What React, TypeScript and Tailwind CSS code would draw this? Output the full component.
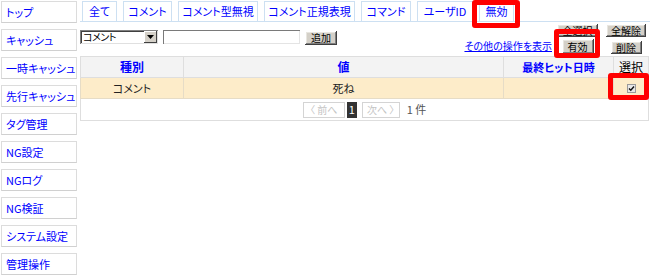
import React from "react";

const FONT = "[font-family:'Noto_Sans_CJK_JP','Noto_Sans',sans-serif] [font-feature-settings:'palt']";

const sideItems = [
  "トップ",
  "キャッシュ",
  "一時キャッシュ",
  "先行キャッシュ",
  "タグ管理",
  "NG設定",
  "NGログ",
  "NG検証",
  "システム設定",
  "管理操作",
];

const tabs: { label: string; w: string }[] = [
  { label: "全て", w: "w-[35px]" },
  { label: "コメント", w: "w-[49px]" },
  { label: "コメント型無視", w: "w-[80px]" },
  { label: "コメント正規表現", w: "w-[91px]" },
  { label: "コマンド", w: "w-[50px]" },
  { label: "ユーザID", w: "w-[56px]" },
  { label: "無効", w: "w-[35px]" },
];

function WinButton({ label, className = "" }: { label: string; className?: string }) {
  return (
    <div
      className={
        "flex items-center justify-center bg-[#d4d0c8] text-[10px] leading-none text-black whitespace-nowrap shadow-[inset_-1px_-1px_#404040,inset_1px_1px_#ffffff,inset_-2px_-2px_#808080,inset_2px_2px_#e8e6e0] " +
        className
      }
    >
      {label}
    </div>
  );
}

export default function App() {
  return (
    <div className={"relative w-[650px] h-[280px] bg-white overflow-hidden " + FONT}>
      <div className="flex pt-[1px] pl-[1px] gap-[3px]">
        {/* Sidebar */}
        <div className="flex flex-col gap-[6px] w-[76px] shrink-0">
          {sideItems.map((s) => (
            <div
              key={s}
              className="h-[22px] border border-[#dcdcdc] border-b-[#d0d0d0] pl-[4px] flex items-center text-[11px] leading-none text-[#0000ff] whitespace-nowrap"
            >
              {s}
            </div>
          ))}
        </div>

        {/* Main */}
        <div className="flex-1 flex flex-col">
          {/* Tabs */}
          <div className="flex gap-[6px] pl-[2px] border-b border-[#cde0f2] h-[21px]">
            {tabs.map((t) => (
              <div
                key={t.label}
                className={
                  "h-[20px] border-t border-l border-r border-[#cde0f2] flex items-center justify-center text-[11px] leading-none text-[#0000ff] whitespace-nowrap " +
                  t.w
                }
              >
                {t.label}
              </div>
            ))}
          </div>

          {/* Controls row */}
          <div className="flex justify-between">
            <div className="flex items-start gap-[5px] mt-[8px]">
              <div className="w-[78px] h-[14px] flex bg-white shadow-[inset_1px_1px_#808080,inset_-1px_-1px_#e0e0e0,inset_2px_2px_#404040]">
                <div className="flex-1 text-[10px] leading-[14px] pl-[3px] text-black tracking-[-0.5px]">コメント</div>
                <div className="w-[13px] h-[12px] mt-[1px] mr-[1px] bg-[#d4d0c8] flex items-center justify-center shadow-[inset_-1px_-1px_#404040,inset_1px_1px_#ffffff]">
                  <svg width="7" height="4" viewBox="0 0 7 4">
                    <path d="M0 0 H7 L3.5 4 Z" fill="#000" />
                  </svg>
                </div>
              </div>
              <div className="w-[137px] h-[14px] bg-white shadow-[inset_1px_1px_#7a7a7a,inset_-1px_-1px_#e4e4e4]" />
              <WinButton label="追加" className="w-[32px] h-[14px] mt-[1px]" />
            </div>

            <div className="grid grid-cols-[auto_49px_48px] grid-rows-[13px_15px] gap-y-[2px] mt-[2px] items-center">
              <div />
              <div className="flex justify-center">
                <WinButton label="全選択" className="w-[41px] h-[13px]" />
              </div>
              <div className="flex justify-center">
                <WinButton label="全解除" className="w-[40px] h-[13px]" />
              </div>
              <div className="text-[10px] leading-none text-[#0000ff] underline whitespace-nowrap self-end pb-[3px] pr-[1px]">
                その他の操作を表示
              </div>
              <div className="flex justify-center">
                <WinButton label="有効" className="w-[32px] h-[15px]" />
              </div>
              <div className="flex justify-center items-end h-[15px]">
                <WinButton label="削除" className="w-[31px] h-[13px]" />
              </div>
            </div>
          </div>

          {/* Table */}
          <table className="mt-[2px] w-[568px] table-fixed border-collapse border border-[#dedede] text-[11px] leading-none">
            <colgroup>
              <col className="w-[103px]" />
              <col className="w-[320px]" />
              <col className="w-[110px]" />
              <col className="w-[35px]" />
            </colgroup>
            <thead>
              <tr className="h-[21px] bg-[#f3f3f3]">
                <th className="border border-[#dedede] text-[#0000ff] text-[12px] font-bold">種別</th>
                <th className="border border-[#dedede] text-[#0000ff] text-[12px] font-bold">値</th>
                <th className="border border-[#dedede] text-[#0000ff] text-[11px] font-bold whitespace-nowrap">最終ヒット日時</th>
                <th className="border border-[#dedede] text-black text-[12px] font-normal">選択</th>
              </tr>
            </thead>
            <tbody>
              <tr className="h-[21px] bg-[#fdecc9]">
                <td className="border border-[#e6dcc6] text-center text-[#222]">コメント</td>
                <td className="border border-[#e6dcc6] text-center text-[#222]">死ね</td>
                <td className="border border-[#e6dcc6]" />
                <td className="border border-[#e6dcc6]">
                  <div className="flex justify-center">
                    <div className="w-[9px] h-[9px] bg-[#e8e8e8] border border-[#9a9a9a] flex items-center justify-center">
                      <svg width="7" height="7" viewBox="0 0 7 7">
                        <path d="M1 3.5 L2.8 5.3 L6 1.5" stroke="#111" strokeWidth="1.4" fill="none" />
                      </svg>
                    </div>
                  </div>
                </td>
              </tr>
              <tr className="h-[22px]">
                <td colSpan={4} className="border border-[#dedede]">
                  <div className="flex items-center justify-center">
                    <div className="w-[42px] h-[16px] border border-[#d4d4d4] text-[#c4c4c4] text-[10px] flex items-center justify-center">
                      〈 前へ
                    </div>
                    <div className="ml-[2px] w-[10px] h-[16px] bg-[#333] text-white text-[11px] flex items-center justify-center">1</div>
                    <div className="ml-[5px] w-[38px] h-[16px] border border-[#d4d4d4] text-[#c4c4c4] text-[10px] flex items-center justify-center">
                      次へ 〉
                    </div>
                    <div className="ml-[7px] text-[11px] text-[#555]">1 件</div>
                  </div>
                </td>
              </tr>
            </tbody>
          </table>
        </div>
      </div>

      {/* Red annotation boxes */}
      <div className="absolute left-[472px] top-[0px] w-[48px] h-[28px] border-[5px] border-[#ff0000] rounded-[3px]" />
      <div className="absolute left-[554px] top-[29px] w-[46px] h-[29px] border-[5px] border-[#ff0000] rounded-[3px]" />
      <div className="absolute left-[608px] top-[73px] w-[41px] h-[27px] border-[5px] border-[#ff0000] rounded-[3px]" />
    </div>
  );
}
